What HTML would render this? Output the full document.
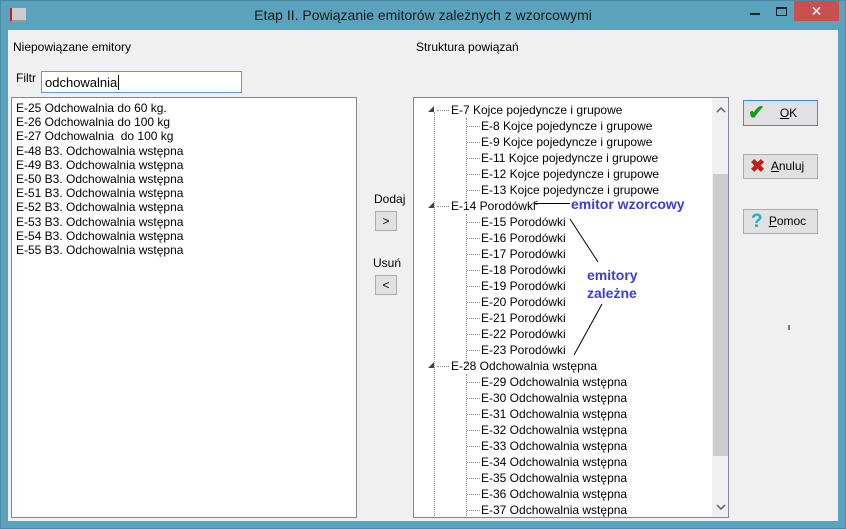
<!DOCTYPE html>
<html><head><meta charset="utf-8"><style>
*{margin:0;padding:0;box-sizing:border-box}
body{width:846px;height:529px;background:#5ba3bd;position:relative;overflow:hidden;font-family:"Liberation Sans",sans-serif;font-size:12px;color:#000}
.a{position:absolute}
#win{position:absolute;left:0;top:0;width:846px;height:529px;border:1px solid #4a8aa3}
#client{left:8px;top:30px;width:830px;height:491px;background:#f0f0f0}
.title{left:0;width:846px;top:7px;text-align:center;font-size:14px;color:#1a1a1a}
.box{background:#fff;border:1px solid #828790}
.row{position:absolute;white-space:nowrap;line-height:16px;height:16px}
.btn{background:#e1e1e1;border:1px solid #adadad;text-align:center}
.dv{border-left:1px dotted #888}
.dh{border-top:1px dotted #888;height:0}
.blue{color:#3d3dd6;font-weight:bold;font-size:14px;font-family:"Liberation Sans",sans-serif}
</style></head><body>
<div id="win"></div>
<div class="a" style="left:10px;top:8px;width:16px;height:14px;border-left:2px solid #b22;border-bottom:2px solid #999;background:#ccc"></div>
<div class="a title">Etap II. Powiązanie emitorów zależnych z wzorcowymi</div>
<div class="a" style="left:750px;top:13px;width:10px;height:2px;background:#222"></div>
<div class="a" style="left:776px;top:7px;width:11px;height:9px;border:1px solid #222;border-top-width:2px"></div>
<div class="a" style="left:794px;top:1px;width:45px;height:20px;background:#c75050;color:#fff;text-align:center;font-size:14px;line-height:20px">✕</div>
<div id="client" class="a"></div>
<div class="a" style="left:13px;top:40px">Niepowiązane emitory</div>
<div class="a" style="left:416px;top:40px">Struktura powiązań</div>
<div class="a" style="left:16px;top:71px">Filtr</div>
<div class="a box" style="left:41px;top:71px;width:201px;height:22px;border-color:#569de5;font-size:13px;padding:3px 0 0 3px">odchowalnia<span style="border-left:1px solid #000;margin-left:1px"></span></div>
<div class="a box" style="left:11px;top:97px;width:346px;height:421px;padding:3px 0 0 4px;font-size:12px;line-height:14.2px">E-25 Odchowalnia do 60 kg.<br>E-26 Odchowalnia do 100 kg<br>E-27 Odchowalnia &nbsp;do 100 kg<br>E-48 B3. Odchowalnia wstępna<br>E-49 B3. Odchowalnia wstępna<br>E-50 B3. Odchowalnia wstępna<br>E-51 B3. Odchowalnia wstępna<br>E-52 B3. Odchowalnia wstępna<br>E-53 B3. Odchowalnia wstępna<br>E-54 B3. Odchowalnia wstępna<br>E-55 B3. Odchowalnia wstępna</div>
<div class="a" style="left:374px;top:192px">Dodaj</div>
<div class="a btn" style="left:375px;top:211px;width:22px;height:20px;line-height:18px">&gt;</div>
<div class="a" style="left:373px;top:256px">Usuń</div>
<div class="a btn" style="left:375px;top:275px;width:22px;height:20px;line-height:18px">&lt;</div>
<div class="a box" style="left:413px;top:97px;width:316px;height:421px;overflow:hidden">
<div class="a" style="left:298px;top:0;width:17px;height:419px;background:#f0f0f0"></div>
<div class="a" style="left:299px;top:76px;width:15px;height:282px;background:#cdcdcd"></div>
<svg class="a" style="left:301px;top:8px" width="12" height="8"><polyline points="2,6 6,2 10,6" fill="none" stroke="#606060" stroke-width="1.5"/></svg>
<svg class="a" style="left:301px;top:405px" width="12" height="8"><polyline points="2,2 6,6 10,2" fill="none" stroke="#606060" stroke-width="1.5"/></svg>
<div id="tree"></div>
</div>
<div class="a" style="left:534px;top:203px;width:36px;height:1px;background:#000"></div>
<div class="a" style="left:533px;top:199px;font-size:9px;line-height:9px">&lt;</div>
<div class="a blue" style="left:571px;top:196px">emitor wzorcowy</div>
<div class="a blue" style="left:587px;top:267px">emitory</div>
<div class="a blue" style="left:587px;top:285px">zależne</div>
<svg class="a" style="left:0;top:0" width="846" height="529"><line x1="570" y1="219" x2="598" y2="262" stroke="#000"/><line x1="602" y1="304" x2="574" y2="355" stroke="#000"/><line x1="789" y1="325" x2="789" y2="330" stroke="#000"/></svg>
<div class="a btn" style="left:743px;top:100px;width:75px;height:26px;border-color:#3c8ce6;line-height:24px"><span style="position:absolute;left:4px;top:0;color:#1a9a1a;font-size:20px;font-weight:bold">✔</span><span style="margin-left:16px"><u>O</u>K</span></div>
<div class="a btn" style="left:743px;top:154px;width:75px;height:25px;line-height:23px"><span style="position:absolute;left:6px;top:0;color:#c0201a;font-size:18px;font-weight:bold">✖</span><span style="margin-left:14px"><u>A</u>nuluj</span></div>
<div class="a btn" style="left:743px;top:209px;width:75px;height:25px;line-height:23px"><span style="position:absolute;left:7px;top:0;color:#1ab0c8;font-size:19px;font-weight:bold">?</span><span style="margin-left:14px"><u>P</u>omoc</span></div>
<script>
var t=document.getElementById('tree'),h='';
var rows=[[0,'E-7 Kojce pojedyncze i grupowe']];
['8','9','11','12','13'].forEach(n=>rows.push([1,'E-'+n+' Kojce pojedyncze i grupowe']));
rows.push([0,'E-14 Porodówki']);
for(var i=15;i<=23;i++)rows.push([1,'E-'+i+' Porodówki']);
rows.push([0,'E-28 Odchowalnia wstępna']);
for(var i=29;i<=37;i++)rows.push([1,'E-'+i+' Odchowalnia wstępna']);
rows.forEach(function(r,k){var y=4+k*16;
if(r[0]==0){h+='<div class="a" style="left:14px;top:'+(y+4)+'px;width:0;height:0;border-left:6px solid transparent;border-bottom:6px solid #444"></div>';
h+='<div class="a dh" style="left:23px;top:'+(y+8)+'px;width:12px"></div>';
h+='<div class="row" style="left:37px;top:'+y+'px">'+r[1]+'</div>';}
else{h+='<div class="a dh" style="left:53px;top:'+(y+8)+'px;width:13px"></div>';
h+='<div class="row" style="left:67px;top:'+y+'px">'+r[1]+'</div>';}});
h+='<div class="a dv" style="left:20px;top:14px;height:410px"></div>';
h+='<div class="a dv" style="left:52px;top:20px;height:88px"></div>';
h+='<div class="a dv" style="left:52px;top:116px;height:152px"></div>';
h+='<div class="a dv" style="left:52px;top:276px;height:150px"></div>';
t.innerHTML=h;
</script>
</body></html>
